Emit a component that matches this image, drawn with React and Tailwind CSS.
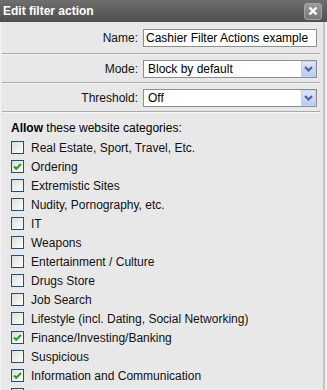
import React from 'react';

const categories = [
  { label: 'Real Estate, Sport, Travel, Etc.', checked: false },
  { label: 'Ordering', checked: true },
  { label: 'Extremistic Sites', checked: false },
  { label: 'Nudity, Pornography, etc.', checked: false },
  { label: 'IT', checked: false },
  { label: 'Weapons', checked: false },
  { label: 'Entertainment / Culture', checked: false },
  { label: 'Drugs Store', checked: false },
  { label: 'Job Search', checked: false },
  { label: 'Lifestyle (incl. Dating, Social Networking)', checked: false },
  { label: 'Finance/Investing/Banking', checked: true },
  { label: 'Suspicious', checked: false },
  { label: 'Information and Communication', checked: true },
  { label: '', checked: false },
];

const Check = ({ checked }) => (
  <div className="w-[13px] h-[13px] border border-[#1c5180] bg-gradient-to-br from-[#dcdcd7] to-white flex items-center justify-center shrink-0">
    {checked && (
      <svg width="9" height="9" viewBox="0 0 9 9">
        <path d="M1 4.5 L3.2 6.8 L8 2" stroke="#21a121" strokeWidth="2" fill="none" />
      </svg>
    )}
  </div>
);

const Arrow = () => (
  <div className="w-[15px] h-full bg-gradient-to-b from-[#dbe5fc] to-[#b8cbf6] border border-[#c3d3f5] flex items-center justify-center shrink-0">
    <svg width="9" height="6" viewBox="0 0 9 6">
      <path d="M1 1 L4.5 4.5 L8 1" stroke="#4d6185" strokeWidth="2" fill="none" />
    </svg>
  </div>
);

const Row = ({ label, children, first }) => (
  <>
    <div className={`h-[27px] flex ${first ? 'items-start pt-[3px]' : 'items-center'}`}>
      <div className={`w-[137px] text-right text-[#111] ${first ? 'leading-[18px]' : ''}`}>{label}</div>
      <div className="ml-[5px] w-[174px] h-[18px] bg-white border border-[#8e8e8e] flex items-center">
        {children}
      </div>
    </div>
    <div className="mx-[1px] h-[1px] bg-[#a9a9a9]" />
    <div className="mx-[1px] h-[1px] bg-[#f6f6f6]" />
  </>
);

export default function App() {
  return (
    <div
      className="w-[327px] h-[390px] overflow-hidden bg-white text-[12px] text-black"
      style={{ fontFamily: '"Liberation Sans", Arial, sans-serif' }}
    >
      <div className="h-[22px] bg-gradient-to-b from-[#6e6e6e] to-[#4f4f4f] flex items-center justify-between pl-[3px] pr-[5px]">
        <span className="text-white font-bold text-[12px]">Edit filter action</span>
        <div className="w-[18px] h-[17px] rounded-[3px] border border-[#a5a5a5] bg-gradient-to-b from-[#9a9a9a] to-[#777] flex items-center justify-center">
          <svg width="10" height="10" viewBox="0 0 10 10">
            <path d="M1.5 1.5 L8.5 8.5 M8.5 1.5 L1.5 8.5" stroke="white" strokeWidth="2.4" />
          </svg>
        </div>
      </div>
      <div className="flex h-[368px]">
        <div className="w-[323px] bg-[#e8e8e8] border-l border-[#f4f4f4] pt-[4px] pr-[2px]">
          <Row label="Name:" first>
            <span className="pl-[2px]">Cashier Filter Actions example</span>
          </Row>
          <Row label="Mode:">
            <span className="pl-[4px] flex-1">Block by default</span>
            <Arrow />
          </Row>
          <Row label="Threshold:">
            <span className="pl-[4px] flex-1">Off</span>
            <Arrow />
          </Row>
          <div className="pl-[10px] pt-[5px] h-[25px] flex items-center">
            <span><b>Allow</b> these website categories:</span>
          </div>
          <div className="flex flex-col">
            {categories.map((c, i) => (
              <div key={i} className="h-[19px] flex items-center pl-[10px] gap-[7px]">
                <Check checked={c.checked} />
                {c.label && <span className="text-[#111]">{c.label}</span>}
              </div>
            ))}
          </div>
        </div>
        <div className="w-[2px] bg-[#c4c4c4]" />
        <div className="flex-1 bg-[#f0f0f0]" />
      </div>
    </div>
  );
}
